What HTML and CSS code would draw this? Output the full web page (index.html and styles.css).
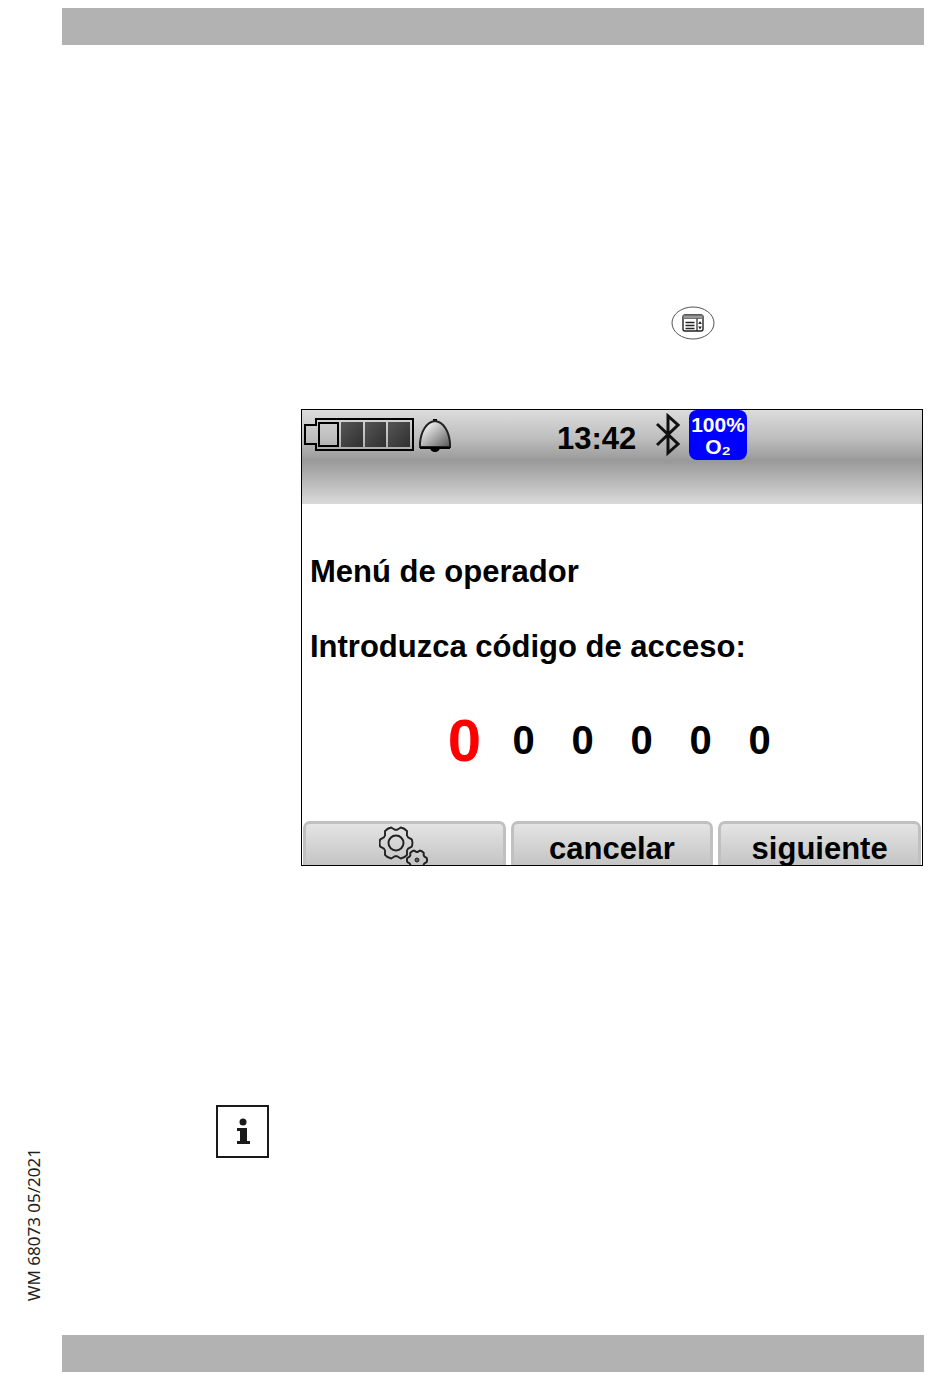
FILE: index.html
```
<!DOCTYPE html>
<html lang="es">
<head>
    <meta charset="UTF-8">
    <meta name="viewport" content="width=device-width, initial-scale=1.0">
    <title>Menú de operador</title>
    <link rel="stylesheet" href="styles.css">
</head>
<body>
    <div class="page">
        <aside class="doc-number">WM 68073 05/2021</aside>

        <div class="content">
            <div class="bar"></div>

            <main>
                <button type="button" class="menu-key" aria-label="Menú">
                    <svg width="44" height="34" viewBox="0 0 44 34" fill="none" stroke="#222">
                        <ellipse cx="22" cy="17" rx="21" ry="16" stroke="#555"/>
                        <rect x="12" y="9" width="20" height="16" rx="2" stroke-width="1.4"/>
                        <path d="M12.5 9.5h19v3h-19z" fill="#999" stroke="#777"/>
                        <path d="M26 12.5V25" stroke-width="1.2"/>
                        <path d="M14.5 16.5h9M14.5 19.5h9M14.5 22.5h9" stroke-width="1.4"/>
                        <path d="M27.2 18l1.8-3 1.8 3zM27.2 20.5l1.8 3 1.8-3z" fill="#222" stroke="none"/>
                    </svg>
                </button>

                <form class="screen">
                    <header class="status">
                        <div class="status-left">
                            <svg width="111" height="34" viewBox="0 0 111 34" fill="none" stroke="#000" stroke-width="2">
                                <path d="M12 1h97v31H12v-6H1V7h11z"/>
                                <rect x="15" y="5" width="19" height="23"/>
                                <g fill="url(#cell)" stroke="none">
                                    <rect x="37" y="4" width="22" height="25"/>
                                    <rect x="61" y="4" width="21" height="25"/>
                                    <rect x="84" y="4" width="22" height="25"/>
                                </g>
                                <defs>
                                    <linearGradient id="cell" x2="1" y2="1">
                                        <stop stop-color="#555"/>
                                        <stop offset="1" stop-color="#303030"/>
                                    </linearGradient>
                                </defs>
                            </svg>
                            <svg width="34" height="34" viewBox="0 0 34 34">
                                <defs>
                                    <linearGradient id="bell" x2="1" y2="1">
                                        <stop offset=".2" stop-color="#eee"/>
                                        <stop offset="1" stop-color="#555"/>
                                    </linearGradient>
                                </defs>
                                <path d="M12 30h10q-1 4-5 4t-5-4zM15 4V1h4v3z"/>
                                <path d="M2 29v-4C3 14 8 4 17 3c9 1 14 11 15 22v4z" fill="url(#bell)" stroke="#222" stroke-width="2"/>
                                <path d="M2 30h30" stroke="#000" stroke-width="2"/>
                            </svg>
                        </div>
                        <time class="clock">13:42</time>
                        <svg class="bluetooth" width="24" height="44" viewBox="0 0 24 44" fill="none" stroke="#111" stroke-width="3">
                            <path d="M1 11l21 20-10 9V3l10 9L1 32"/>
                        </svg>
                        <div class="oxygen">100%<br>O₂</div>
                    </header>

                    <div class="entry">
                        <h1>Menú de operador</h1>
                        <h2 id="codeLabel">Introduzca código de acceso:</h2>
                        <div class="code" role="group" aria-labelledby="codeLabel">
                            <input class="active" type="text" maxlength="1" value="0" aria-label="Cifra 1">
                            <input type="text" maxlength="1" value="0" aria-label="Cifra 2">
                            <input type="text" maxlength="1" value="0" aria-label="Cifra 3">
                            <input type="text" maxlength="1" value="0" aria-label="Cifra 4">
                            <input type="text" maxlength="1" value="0" aria-label="Cifra 5">
                            <input type="text" maxlength="1" value="0" aria-label="Cifra 6">
                        </div>
                    </div>

                    <div class="softkeys">
                        <button type="button" aria-label="Ajustes">
                            <svg width="50" height="42" viewBox="0 0 50 42" fill="none" stroke="#222" stroke-linejoin="round">
                                <defs>
                                    <path id="gear" d="M16.6-3.8Q18 0 16.6 3.8L12.7 5.9 11.5 8 11.6 12.4Q9 15.6 5 16.3L1.2 13.9H-1.2L-5 16.3Q-9 15.6-11.6 12.4L-11.5 8-12.7 5.9-16.6 3.8Q-18 0-16.6-3.8L-12.7-5.9-11.5-8-11.6-12.4Q-9-15.6-5-16.3L-1.2-13.9H1.2L5-16.3Q9-15.6 11.6-12.4L11.5-8 12.7-5.9z"/>
                                </defs>
                                <use href="#gear" transform="translate(17 18) scale(.95)" stroke-width="2"/>
                                <circle cx="17" cy="18" r="7.5" stroke-width="2"/>
                                <use href="#gear" transform="translate(38 35) scale(.58)" stroke-width="3.4"/>
                                <circle cx="38" cy="35" r="2" fill="#555"/>
                            </svg>
                        </button>
                        <button type="button">cancelar</button>
                        <button type="submit">siguiente</button>
                    </div>
                </form>

                <div class="info">
                    <svg width="14" height="28" viewBox="0 0 14 28" fill="#1a1a1a">
                        <circle cx="7" cy="4" r="3.5"/>
                        <path d="M1 10h10v13h3v3H1v-3h3V13H1z"/>
                    </svg>
                </div>
            </main>

            <div class="bar"></div>
        </div>
    </div>
</body>
</html>
```

FILE: styles.css
```
* {
    box-sizing: border-box;
}
body {
    margin: 0;
    background-color: #fff;
    color: #000;
    font-family: "Liberation Sans", Arial, sans-serif;
}
.page {
    display: grid;
    grid-template-columns: 62px 1fr;
    min-height: 100vh;
    padding: 8px 26px 15px 0;
}
.doc-number {
    align-self: end;
    margin: 0 0 71px 23px;
    writing-mode: vertical-rl;
    transform: rotate(180deg);
    font-family: "Noto Sans", sans-serif;
    font-size: 17px;
    line-height: 22px;
    color: #222;
}
.content {
    display: flex;
    flex-direction: column;
}
.bar {
    height: 37px;
    background-color: #b2b2b2;
}
main {
    flex: 1;
    display: flex;
    flex-direction: column;
    padding: 261px 0 177px 154px;
}
button {
    padding: 0;
    border: none;
    background: none;
    cursor: pointer;
}
svg {
    display: block;
}
.menu-key {
    align-self: flex-start;
    margin-left: 455px;
}
.screen {
    margin: 69px 1px 0 85px;
    border: 1px solid #000;
    overflow: hidden;
}
.status {
    display: flex;
    align-items: flex-start;
    height: 94px;
    padding-left: 2px;
    background: linear-gradient(#dcdcdc, #bebebe 30%, #999 54%, #b2b2b2 72%, #dadada);
}
.status-left {
    display: flex;
    gap: 3px;
    width: 253px;
    padding-top: 8px;
}
.clock {
    width: 80px;
    margin-top: 11px;
    font-size: 31px;
    font-weight: bold;
    line-height: 36px;
}
.bluetooth {
    margin: 3px 9px 0 19px;
}
.oxygen {
    width: 58px;
    height: 50px;
    padding-top: 4px;
    border-radius: 8px;
    background-color: #00f;
    color: #fff;
    font-size: 21px;
    font-weight: bold;
    line-height: 22px;
    text-align: center;
}
.entry {
    padding: 50px 8px 0;
}
h1, h2 {
    margin: 0 0 39px;
    font-size: 31px;
    font-weight: bold;
    line-height: 36px;
}
.code {
    display: flex;
    justify-content: center;
    align-items: center;
    height: 72px;
}
.code input {
    width: 59px;
    padding: 0;
    border: none;
    outline: none;
    background: none;
    color: #000;
    font-family: inherit;
    font-size: 40px;
    font-weight: bold;
    text-align: center;
}
.code .active {
    color: #f00;
    font-size: 60px;
}
.softkeys {
    display: grid;
    grid-template-columns: repeat(3, 1fr);
    gap: 5px;
    margin-top: 45px;
    padding: 0 1px;
}
.softkeys button {
    display: flex;
    justify-content: center;
    height: 44px;
    padding-top: 7px;
    border: 3px solid #c0c0c0;
    border-bottom: none;
    border-radius: 7px 7px 0 0;
    background: linear-gradient(#e4e4e4, #c4c4c4);
    color: #000;
    font-family: inherit;
    font-size: 31px;
    font-weight: bold;
    line-height: 36px;
    overflow: hidden;
}
.softkeys svg {
    margin-top: -6px;
}
.info {
    display: flex;
    justify-content: center;
    align-items: center;
    width: 53px;
    height: 53px;
    margin-top: auto;
    border: 2px solid #1a1a1a;
}
```
